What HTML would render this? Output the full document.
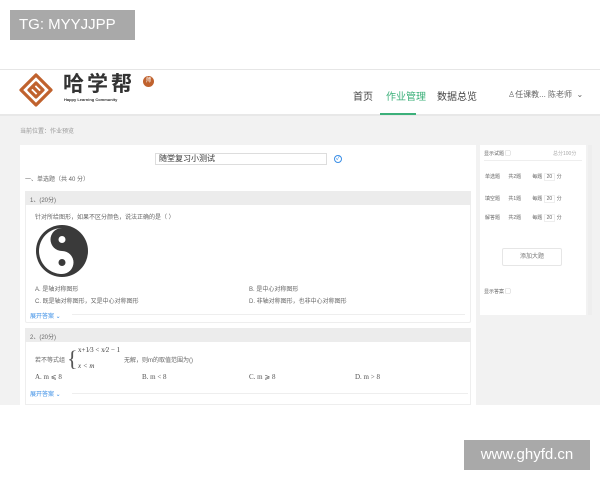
<!DOCTYPE html><html><head><meta charset="utf-8"><style>
*{margin:0;padding:0;box-sizing:border-box}
body{width:600px;height:480px;background:#fff;font-family:"Liberation Sans","Noto Sans CJK SC",sans-serif;position:relative;overflow:hidden;color:#555}
.a{position:absolute}
.t{font-size:6px;color:#666;white-space:nowrap}
</style></head><body>
<div class="a" style="left:10px;top:10px;width:125px;height:30px;background:#a9a9a9;color:#fff;font-size:15px;line-height:30px;padding-left:9px">TG: MYYJJPP</div>
<div class="a" style="left:0;top:69px;width:600px;height:1px;background:#e6e6e6"></div>
<div class="a" style="left:0;top:116px;width:600px;height:289px;background:#f2f2f2"></div>
<div class="a" style="left:0;top:114px;width:600px;height:2px;background:#e8e8e8"></div>
<svg class="a" style="left:19px;top:73px" width="34" height="34" viewBox="0 0 34 34"><g fill="none" stroke="#c0622e" stroke-width="3.2" stroke-linejoin="round"><path d="M17 2L32 17 17 32 2 17Z"/><path d="M10 17l7-7 7 7-7 7z"/><path d="M13 13l8 8"/></g></svg>
<div class="a" style="left:63px;top:74px;font-size:21px;line-height:21px;font-weight:bold;color:#333;letter-spacing:3px">哈学帮</div>
<div class="a" style="left:143px;top:76px;width:11px;height:11px;border-radius:50%;background:#c0622e;color:#fff;font-size:6px;text-align:center;line-height:11px">师</div>
<div class="a" style="left:64px;top:97px;font-size:4px;color:#333;font-weight:bold">Happy Learning Community</div>
<div class="a" style="left:353px;top:88px;font-size:10px;color:#444">首页</div>
<div class="a" style="left:386px;top:88px;font-size:10px;color:#3cb07a">作业管理</div>
<div class="a" style="left:380px;top:113px;width:36px;height:2px;background:#3cb07a"></div>
<div class="a" style="left:437px;top:88px;font-size:10px;color:#444">数据总览</div>
<div class="a" style="left:508px;top:89px;font-size:8px;color:#666">♙任课教... 陈老师 &nbsp;⌄</div>
<div class="a t" style="left:20px;top:126px;color:#999">当前位置：作业预览</div>
<div class="a" style="left:20px;top:145px;width:456px;height:260px;background:#fff"></div>
<div class="a" style="left:155px;top:153px;width:172px;height:12px;border:1px solid #ddd;font-size:8px;color:#333;padding-left:3px;line-height:10px">随堂复习小测试</div>
<div class="a" style="left:334px;top:155px;width:8px;height:8px;border:1px solid #3a8ee6;border-radius:50%;font-size:6px;color:#3a8ee6;line-height:6px;text-align:center">✓</div>
<div class="a t" style="left:25px;top:174px">一、单选题（共 40 分）</div>
<div class="a" style="left:25px;top:191px;width:446px;height:132px;border:1px solid #eee;border-radius:2px"></div>
<div class="a" style="left:25px;top:191px;width:446px;height:14px;background:#ececec"></div>
<div class="a t" style="left:30px;top:195px">1、(20分)</div>
<div class="a t" style="left:35px;top:212px">针对所给图形，如果不区分颜色，说法正确的是（ ）</div>
<svg class="a" style="left:35px;top:224px" width="54" height="54" viewBox="0 0 54 54"><defs><clipPath id="L"><rect x="0" y="0" width="27" height="54"/></clipPath></defs><circle cx="27" cy="27" r="26" fill="#3a3a3a"/><circle cx="27" cy="27" r="23" fill="#fff" clip-path="url(#L)"/><circle cx="27" cy="38.5" r="11.5" fill="#fff"/><circle cx="27" cy="15.5" r="11.5" fill="#3a3a3a"/><circle cx="27" cy="15.5" r="3.5" fill="#fff"/><circle cx="27" cy="38.5" r="3.5" fill="#3a3a3a"/></svg>
<div class="a t" style="left:35px;top:284px">A. 是轴对称图形</div>
<div class="a t" style="left:249px;top:284px">B. 是中心对称图形</div>
<div class="a t" style="left:35px;top:296px">C. 既是轴对称图形，又是中心对称图形</div>
<div class="a t" style="left:249px;top:296px">D. 非轴对称图形，也非中心对称图形</div>
<div class="a t" style="left:30px;top:311px;color:#3a8ee6">展开答案 ⌄</div>
<div class="a" style="left:72px;top:314px;width:393px;height:1px;background:#eee"></div>
<div class="a" style="left:25px;top:328px;width:446px;height:77px;border:1px solid #eee"></div>
<div class="a" style="left:25px;top:328px;width:446px;height:14px;background:#ececec"></div>
<div class="a t" style="left:30px;top:332px">2、(20分)</div>
<div class="a t" style="left:35px;top:355px">若不等式组</div>
<div class="a" style="left:67px;top:346px;font-size:22px;color:#555;font-family:'Liberation Serif',serif;line-height:26px">{</div>
<div class="a" style="left:78px;top:346px;font-size:7px;font-family:'Liberation Serif',serif;color:#444">x+1⁄3 &lt; x⁄2 − 1</div>
<div class="a" style="left:78px;top:362px;font-size:7px;font-family:'Liberation Serif',serif;color:#444;font-style:italic">x &lt; m</div>
<div class="a t" style="left:124px;top:355px">无解，则m的取值范围为()</div>
<div class="a" style="left:35px;top:373px;font-size:7px;font-family:'Liberation Serif',serif">A. m ⩽ 8</div>
<div class="a" style="left:142px;top:373px;font-size:7px;font-family:'Liberation Serif',serif">B. m &lt; 8</div>
<div class="a" style="left:249px;top:373px;font-size:7px;font-family:'Liberation Serif',serif">C. m ⩾ 8</div>
<div class="a" style="left:355px;top:373px;font-size:7px;font-family:'Liberation Serif',serif">D. m &gt; 8</div>
<div class="a t" style="left:30px;top:389px;color:#3a8ee6">展开答案 ⌄</div>
<div class="a" style="left:72px;top:393px;width:396px;height:1px;background:#eee"></div>
<div class="a" style="left:480px;top:145px;width:106px;height:170px;background:#fff"></div>
<div class="a" style="left:588px;top:145px;width:4px;height:170px;background:#eee"></div>
<div class="a t" style="left:484px;top:150px;font-size:5px">显示试题 ▢</div>
<div class="a t" style="left:553px;top:150px;font-size:5px;color:#aaa">总分100分</div>
<div class="a" style="left:484px;top:160px;width:98px;height:1px;background:#eee"></div>
<div class="a t" style="left:485px;top:173px;font-size:5px">单选题 &nbsp;&nbsp;&nbsp;&nbsp;&nbsp;共2题 &nbsp;&nbsp;&nbsp;&nbsp;&nbsp;&nbsp;&nbsp;每题 <span style="border:1px solid #eee;padding:0 2px">20</span> 分</div>
<div class="a t" style="left:485px;top:195px;font-size:5px">填空题 &nbsp;&nbsp;&nbsp;&nbsp;&nbsp;共1题 &nbsp;&nbsp;&nbsp;&nbsp;&nbsp;&nbsp;&nbsp;每题 <span style="border:1px solid #eee;padding:0 2px">20</span> 分</div>
<div class="a t" style="left:485px;top:214px;font-size:5px">解答题 &nbsp;&nbsp;&nbsp;&nbsp;&nbsp;共2题 &nbsp;&nbsp;&nbsp;&nbsp;&nbsp;&nbsp;&nbsp;每题 <span style="border:1px solid #eee;padding:0 2px">20</span> 分</div>
<div class="a" style="left:502px;top:248px;width:60px;height:18px;border:1px solid #e6e6e6;border-radius:2px;font-size:6px;color:#777;text-align:center;line-height:16px">添加大题</div>
<div class="a t" style="left:484px;top:288px;font-size:5px">显示答案 ▢</div>
<div class="a" style="left:464px;top:440px;width:126px;height:30px;background:#a9a9a9;color:#fff;font-size:15px;line-height:30px;text-align:center">www.ghyfd.cn</div>
</body></html>
